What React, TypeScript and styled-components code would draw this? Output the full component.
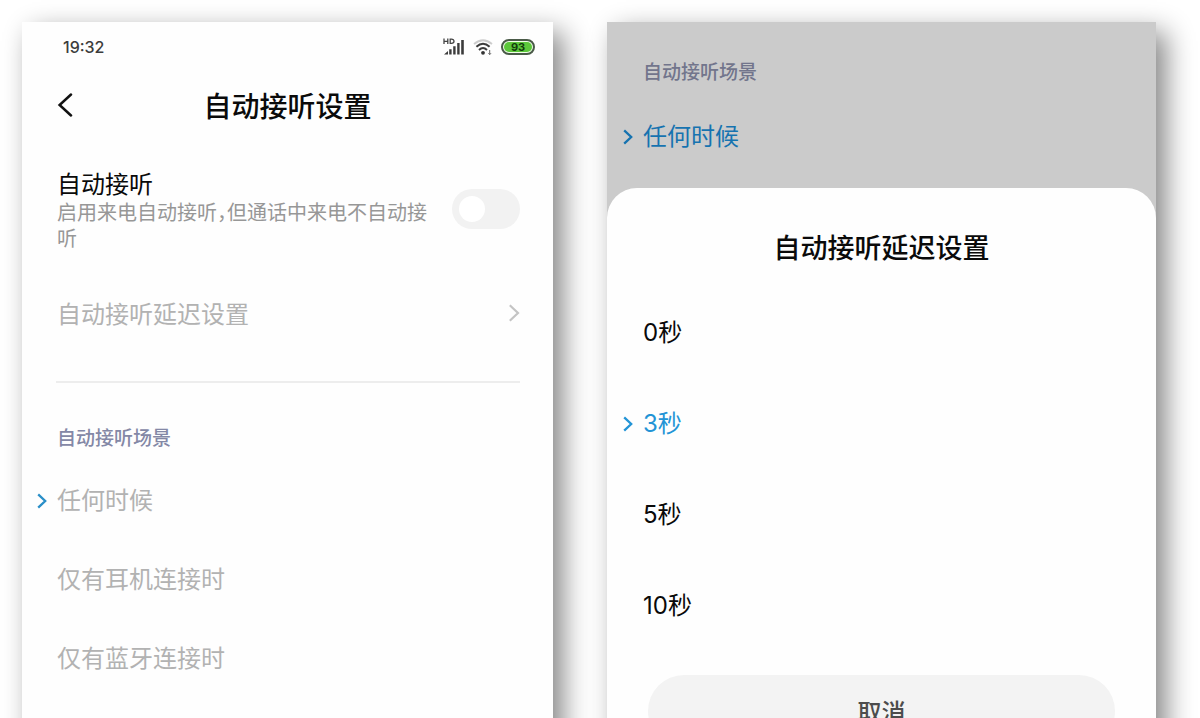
import { useState } from "react";
import styled, { createGlobalStyle } from "styled-components";

const GlobalStyle = createGlobalStyle`
  *, *::before, *::after { box-sizing: border-box; }
  body {
    margin: 0;
    background: #fff;
    color: #0a0a0a;
    font-family: "Noto Sans CJK SC", "Noto Sans", sans-serif;
  }
  button, input { font: inherit; margin: 0; }
`;

const Page = styled.main`
  display: grid;
  grid-template-columns: minmax(0, 531fr) minmax(0, 549fr);
  gap: 54px;
  height: 100vh;
  padding: 22px 44px 0 22px;
  overflow: hidden;
`;

const Screen = styled.section<{ $dimmed?: boolean }>`
  display: flex;
  flex-direction: column;
  min-height: 100vh;
  background: ${(p) => (p.$dimmed ? "#cbcbcb" : "#fefefe")};
  box-shadow: 10px 10px 26px rgba(0, 0, 0, 0.48);
`;

const StatusBar = styled.div`
  display: flex;
  align-items: center;
  justify-content: space-between;
  height: 50px;
  padding: 0 18px 0 41px;
`;

const Clock = styled.time`
  font-family: Inter, "Noto Sans", sans-serif;
  font-size: 16px;
  font-weight: 500;
  line-height: 24px;
  color: #3c3c3c;
`;

const StatusIcons = styled.div`
  display: flex;
  align-items: center;
  gap: 8px;
`;

const Battery = styled.div`
  display: flex;
  width: 34px;
  height: 16px;
  padding: 1px;
  border: 2px solid #4a5a48;
  border-radius: 8px;
  background: #f0ffe8;
`;

const Charge = styled.span`
  flex: 1;
  border-radius: 5px;
  background: #5cc83a;
  color: #123c0c;
  font-family: Inter, "Noto Sans", sans-serif;
  font-size: 11px;
  font-weight: 700;
  line-height: 10px;
  text-align: center;
`;

const Header = styled.header`
  display: grid;
  grid-template-columns: 1fr auto 1fr;
  align-items: center;
  height: 66px;
  padding: 0 35px;
`;

const BackButton = styled.button`
  display: flex;
  justify-self: start;
  padding: 0;
  border: 0;
  background: none;
  color: #111;
`;

const Title = styled.h1`
  margin: 0;
  font-size: 28px;
  font-weight: 500;
  line-height: 36px;
`;

const SwitchRow = styled.label`
  display: flex;
  align-items: center;
  gap: 16px;
  padding: 29px 33px 0 35px;
`;

const SwitchText = styled.span`
  flex: 1;
  min-width: 0;
`;

const RowTitle = styled.span`
  display: block;
  font-size: 24px;
  line-height: 32px;
`;

const RowNote = styled.span`
  display: block;
  color: #979797;
  font-size: 20px;
  font-feature-settings: "halt";
  line-height: 26px;
`;

const Switch = styled.input`
  flex: none;
  display: flex;
  align-items: center;
  width: 68px;
  height: 40px;
  padding: 0 7px;
  border-radius: 20px;
  background: #f2f2f2;
  appearance: none;

  &::before {
    content: "";
    width: 26px;
    height: 26px;
    border-radius: 50%;
    background: #fff;
  }

  &:checked {
    justify-content: flex-end;
    background: #2394d6;
  }
`;

const LinkRow = styled.button`
  display: flex;
  align-items: center;
  justify-content: space-between;
  height: 79px;
  margin-top: 22px;
  padding: 0 33px 0 35px;
  border: 0;
  background: none;
  color: #b2b2b2;
  font-size: 24px;
  line-height: 32px;
`;

const Divider = styled.hr`
  width: auto;
  height: 2px;
  margin: 29px 33px 0 34px;
  border: 0;
  background: #ededed;
`;

const Group = styled.fieldset<{ $top: number }>`
  min-width: 0;
  margin: 0;
  padding: ${(p) => p.$top}px 0 0;
  border: 0;
`;

const GroupLabel = styled.div<{ $inset: number; $dimmed?: boolean }>`
  margin-bottom: 11px;
  padding-left: ${(p) => p.$inset}px;
  color: ${(p) => (p.$dimmed ? "#72758c" : "#8488a6")};
  font-size: 19px;
  font-weight: 500;
  line-height: 26px;
`;

const Option = styled.label<{ $inset: number; $height: number; $color: string }>`
  display: grid;
  grid-template-columns: 10px 1fr;
  align-items: center;
  column-gap: 10px;
  height: ${(p) => p.$height}px;
  padding-left: ${(p) => p.$inset}px;
  color: ${(p) => p.$color};
  font-family: Inter, "Noto Sans CJK SC", sans-serif;
  font-size: 24px;
  line-height: 32px;
`;

const Radio = styled.input`
  grid-area: 1 / 1;
  width: 10px;
  height: 16px;
  appearance: none;
`;

const Mark = styled.svg`
  grid-area: 1 / 1;
  pointer-events: none;
`;

const OptionText = styled.span`
  grid-area: 1 / 2;
`;

const Backdrop = styled.div`
  padding-bottom: 10px;
`;

const Sheet = styled.div`
  flex: 1;
  padding: 41px 0 22px;
  border-radius: 30px 30px 0 0;
  background: #fefefe;
`;

const SheetTitle = styled.h2`
  margin: 0;
  font-size: 27px;
  font-weight: 500;
  line-height: 36px;
  text-align: center;
`;

const CancelRow = styled.div`
  display: flex;
  padding: 24px 41px 0;
`;

const CancelButton = styled.button`
  flex: 1;
  height: 72px;
  padding: 0;
  border: 0;
  border-radius: 36px;
  background: #f3f3f3;
  color: #4c4c4c;
  font-size: 24px;
  font-weight: 500;
  line-height: 32px;
`;

function SignalIcon() {
  return (
    <svg width="22" height="18" viewBox="0 0 22 18" aria-label="HD" fill="none">
      <path
        d="M1 0.6V6M4.8 0.6V6M1 3.3H4.8M7.2 1.2V5.4H8.4Q11 5.4 11 3.3T8.4 1.2Z"
        stroke="#444"
        strokeWidth="1.3"
      />
      <path
        d="M1 16.5 5 13V16.5ZM6.2 11.2H8.6V16.5H6.2ZM10.2 8.2H12.6V16.5H10.2ZM14.2 5H16.6V16.5H14.2ZM18.2 2H20.8V16.5H18.2Z"
        fill="#3c3c3c"
      />
    </svg>
  );
}

function WifiIcon() {
  return (
    <svg width="20" height="18" viewBox="0 0 20 18" fill="none">
      <path d="M1 6Q10 -1.6 19 6" stroke="#ccc" strokeWidth="1.8" />
      <path d="M3.4 8.7Q10 2.8 16.6 8.7" stroke="#3c3c3c" strokeWidth="2" />
      <path d="M6 11.9Q10 8.2 14 11.9" stroke="#3c3c3c" strokeWidth="2" />
      <circle cx="10" cy="14.8" r="1.9" fill="#333" />
      <path d="M16.7 12V16.5M15.4 15.2 16.7 16.6 18 15.2" stroke="#666" strokeWidth="1" />
    </svg>
  );
}

interface ChoiceProps {
  name: string;
  text: string;
  checked: boolean;
  inset: number;
  height: number;
  color: string;
  markColor?: string;
  disabled?: boolean;
  onSelect?: () => void;
}

function Choice({ name, text, checked, inset, height, color, markColor, disabled, onSelect }: ChoiceProps) {
  return (
    <Option $inset={inset} $height={height} $color={color}>
      <Radio type="radio" name={name} checked={checked} disabled={disabled} onChange={() => onSelect?.()} />
      {checked && (
        <Mark width="10" height="16" viewBox="0 0 10 16" fill="none">
          <path d="M1.2 1.4 8.2 8 1.2 14.6" stroke={markColor ?? color} strokeWidth="2.3" />
        </Mark>
      )}
      <OptionText>{text}</OptionText>
    </Option>
  );
}

const scenes = ["任何时候", "仅有耳机连接时", "仅有蓝牙连接时"];
const delays = ["0秒", "3秒", "5秒", "10秒"];

export default function App() {
  const [enabled, setEnabled] = useState(false);
  const [delay, setDelay] = useState("3秒");

  return (
    <>
      <GlobalStyle />
      <Page>
        <Screen>
          <StatusBar>
            <Clock>19:32</Clock>
            <StatusIcons>
              <SignalIcon />
              <WifiIcon />
              <Battery>
                <Charge>93</Charge>
              </Battery>
            </StatusIcons>
          </StatusBar>
          <Header>
            <BackButton aria-label="返回">
              <svg width="16" height="24" viewBox="0 0 16 24" fill="none">
                <path d="M14 1.5 2.6 12 14 22.5" stroke="currentColor" strokeWidth="2.5" strokeLinecap="round" />
              </svg>
            </BackButton>
            <Title>自动接听设置</Title>
          </Header>
          <SwitchRow>
            <SwitchText>
              <RowTitle>自动接听</RowTitle>
              <RowNote>启用来电自动接听，但通话中来电不自动接听</RowNote>
            </SwitchText>
            <Switch type="checkbox" role="switch" checked={enabled} onChange={(e) => setEnabled(e.target.checked)} />
          </SwitchRow>
          <LinkRow>
            自动接听延迟设置
            <svg width="12" height="18" viewBox="0 0 12 18" fill="none">
              <path d="M1.8 1.2 10 9 1.8 16.8" stroke="#c4c4c4" strokeWidth="2.2" />
            </svg>
          </LinkRow>
          <Divider />
          <Group $top={41} aria-label="自动接听场景">
            <GroupLabel $inset={35}>自动接听场景</GroupLabel>
            {scenes.map((scene, i) => (
              <Choice
                key={scene}
                name="scene"
                text={scene}
                checked={i === 0}
                inset={15}
                height={79}
                color="#b2b2b2"
                markColor="#2a8fc8"
                disabled
              />
            ))}
          </Group>
        </Screen>

        <Screen $dimmed>
          <Backdrop>
            <Group $top={36} aria-label="自动接听场景">
              <GroupLabel $inset={36} $dimmed>
                自动接听场景
              </GroupLabel>
              <Choice name="current-scene" text={scenes[0]} checked inset={16} height={83} color="#1673b0" />
            </Group>
          </Backdrop>
          <Sheet role="dialog" aria-labelledby="delay-title">
            <SheetTitle id="delay-title">自动接听延迟设置</SheetTitle>
            <Group $top={22} aria-labelledby="delay-title">
              {delays.map((value) => (
                <Choice
                  key={value}
                  name="delay"
                  text={value}
                  checked={value === delay}
                  inset={16}
                  height={91}
                  color={value === delay ? "#2394d6" : "#0a0a0a"}
                  onSelect={() => setDelay(value)}
                />
              ))}
            </Group>
            <CancelRow>
              <CancelButton>取消</CancelButton>
            </CancelRow>
          </Sheet>
        </Screen>
      </Page>
    </>
  );
}
